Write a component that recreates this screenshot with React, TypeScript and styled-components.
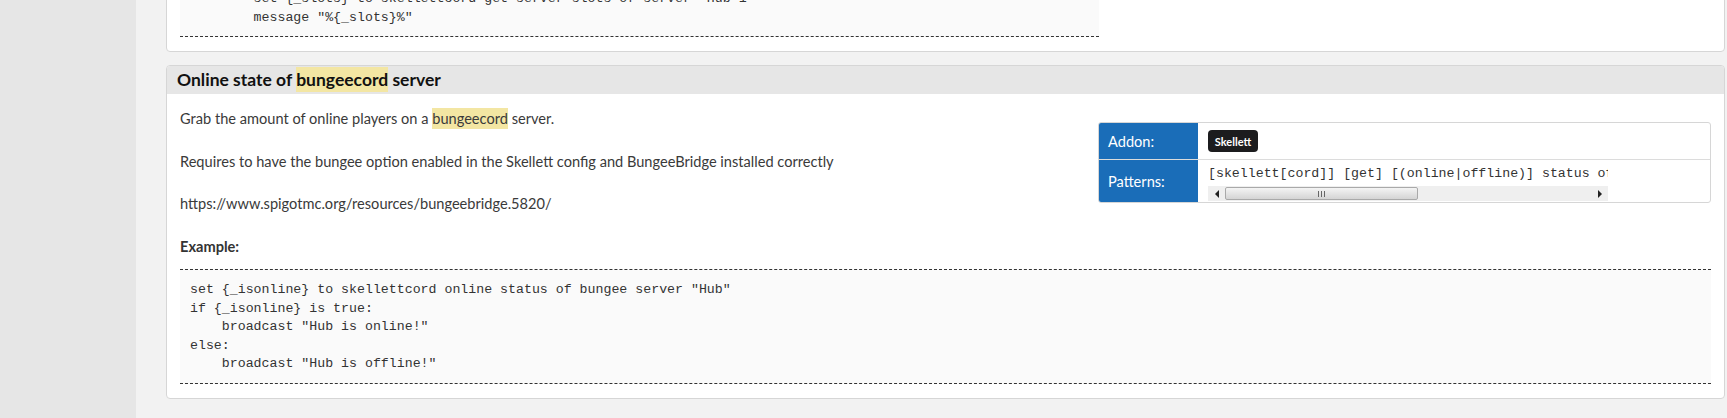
import React from 'react';
import styled, { createGlobalStyle } from 'styled-components';

const GlobalStyle = createGlobalStyle`
  html, body {
    margin: 0;
    padding: 0;
    background: #f2f2f2;
  }
  body {
    font-family: Lato, "Liberation Sans", sans-serif;
    color: #3a3a3a;
  }
`;

const topLines = [
  '        set {_slots} to skellettcord get server slots of server "Hub 1"',
  '        message "%{_slots}%"',
];

const exampleLines = [
  'set {_isonline} to skellettcord online status of bungee server "Hub"',
  'if {_isonline} is true:',
  '    broadcast "Hub is online!"',
  'else:',
  '    broadcast "Hub is offline!"',
];

export default function App() {
  return (
    <Page>
      <GlobalStyle />
      <Sidebar />
      <Content>
        <Stack>
          <Card>
            <CardBody>
              <CodeBlock $width="919px">
                {topLines.map((l, i) => (
                  <CodeLine key={i}>{l}</CodeLine>
                ))}
              </CodeBlock>
            </CardBody>
          </Card>

          <Card>
            <CardHeader>
              Online state of <Mark>bungeecord</Mark> server
            </CardHeader>
            <CardBody>
              <InfoTable>
                <InfoRow>
                  <InfoLabel>Addon:</InfoLabel>
                  <InfoValue>
                    <Badge>Skellett</Badge>
                  </InfoValue>
                </InfoRow>
                <InfoRow $tall>
                  <InfoLabel>Patterns:</InfoLabel>
                  <InfoValue>
                    <PatternBox>
                      <PatternText>
                        [skellett[cord]] [get] [(online|offline)] status of [bungee[cord]] [server] %string%
                      </PatternText>
                      <FakeScrollbar>
                        <ScrollArrow>
                          <ArrowLeft />
                        </ScrollArrow>
                        <ScrollTrack>
                          <ScrollThumb>
                            <Grip>
                              <span />
                              <span />
                              <span />
                            </Grip>
                          </ScrollThumb>
                        </ScrollTrack>
                        <ScrollArrow>
                          <ArrowRight />
                        </ScrollArrow>
                      </FakeScrollbar>
                    </PatternBox>
                  </InfoValue>
                </InfoRow>
              </InfoTable>

              <Description>
                Grab the amount of online players on a <Mark>bungeecord</Mark> server.
                <br />
                <br />
                Requires to have the bungee option enabled in the Skellett config and BungeeBridge installed correctly
                <br />
                <br />
                https://www.spigotmc.org/resources/bungeebridge.5820/
                <br />
                <br />
                <strong>Example:</strong>
              </Description>

              <CodeBlock>
                {exampleLines.map((l, i) => (
                  <CodeLine key={i}>{l}</CodeLine>
                ))}
              </CodeBlock>
            </CardBody>
          </Card>
        </Stack>
      </Content>
    </Page>
  );
}

const Page = styled.div`
  display: flex;
  height: 418px;
  overflow: hidden;
`;

const Sidebar = styled.div`
  flex: 0 0 136px;
  background: #e6e6e6;
`;

const Content = styled.div`
  flex: 1;
  padding: 0 2px 0 30px;
  background: #f2f2f2;
  overflow: hidden;
`;

const Stack = styled.div`
  display: flex;
  flex-direction: column;
  gap: 13px;
  margin-top: -37px;
`;

const Card = styled.div`
  background: #fff;
  border: 1px solid #d6d6d6;
  border-radius: 4px;
  overflow: hidden;
`;

const CardHeader = styled.h3`
  margin: 0;
  height: 28px;
  line-height: 28px;
  padding: 0 10px;
  background: #e6e6e6;
  color: #111;
  font-size: 17.5px;
  font-weight: 700;
`;

const CardBody = styled.div`
  padding: 14px 13px 14px 13px;
  font-size: 14.6px;
  display: flow-root;
`;

const Mark = styled.span`
  background: #f3e6a3;
  padding: 2px 0 2px;
`;

const Description = styled.div`
  line-height: 21.3px;
  margin-bottom: 12px;

  strong {
    color: #333;
  }
`;

const CodeBlock = styled.pre<{ $width?: string }>`
  margin: 0;
  width: ${(p) => p.$width || 'auto'};
  box-sizing: border-box;
  padding: 11px 10px 9px 10px;
  background: #fafafa;
  border-top: 1px dashed #333;
  border-bottom: 1px dashed #333;
  font-family: "Liberation Mono", "Courier New", monospace;
  font-size: 13.25px;
  color: #333;
  clear: both;
`;

const CodeLine = styled.div`
  line-height: 18.5px;
  white-space: pre;
`;

const InfoTable = styled.div`
  float: right;
  width: 611px;
  margin-top: 14px;
  margin-left: 20px;
  border: 1px solid #d6d6d6;
  border-radius: 3px;
  overflow: hidden;
`;

const InfoRow = styled.div<{ $tall?: boolean }>`
  display: flex;
  height: ${(p) => (p.$tall ? '42px' : '36px')};

  & + & {
    border-top: 1px solid #dcdcdc;
  }
`;

const InfoLabel = styled.div`
  flex: 0 0 99px;
  box-sizing: border-box;
  padding-left: 9px;
  display: flex;
  align-items: center;
  background: #1a6db8;
  color: #fff;
  font-size: 14.6px;
`;

const InfoValue = styled.div`
  flex: 1;
  padding-left: 10px;
  display: flex;
  align-items: center;
`;

const Badge = styled.span`
  display: inline-flex;
  align-items: center;
  justify-content: center;
  width: 50px;
  height: 22px;
  border-radius: 4px;
  background: #1c1c1e;
  color: #fff;
  font-size: 11px;
  font-weight: 700;
`;

const PatternBox = styled.div`
  width: 400px;
  align-self: flex-end;
  padding-bottom: 1px;
`;

const PatternText = styled.div`
  overflow: hidden;
  white-space: nowrap;
  font-family: "Liberation Mono", "Courier New", monospace;
  font-size: 13.25px;
  line-height: 18px;
  color: #333;
  padding-bottom: 3px;
`;

const FakeScrollbar = styled.div`
  display: flex;
  height: 15px;
  background: #efefef;
`;

const ScrollArrow = styled.div`
  flex: 0 0 17px;
  display: flex;
  align-items: center;
  justify-content: center;
`;

const ArrowLeft = styled.span`
  width: 0;
  height: 0;
  border-top: 4px solid transparent;
  border-bottom: 4px solid transparent;
  border-right: 4px solid #222;
`;

const ArrowRight = styled.span`
  width: 0;
  height: 0;
  border-top: 4px solid transparent;
  border-bottom: 4px solid transparent;
  border-left: 4px solid #222;
`;

const ScrollTrack = styled.div`
  flex: 1;
  display: flex;
  align-items: stretch;
  padding: 1px 0;
`;

const ScrollThumb = styled.div`
  width: 193px;
  box-sizing: border-box;
  border: 1px solid #a9a9a9;
  border-radius: 2px;
  background: linear-gradient(#f4f4f4, #d4d4d4);
  display: flex;
  align-items: center;
  justify-content: center;
`;

const Grip = styled.div`
  display: flex;
  gap: 2px;

  span {
    width: 1px;
    height: 6px;
    background: #666;
  }
`;
